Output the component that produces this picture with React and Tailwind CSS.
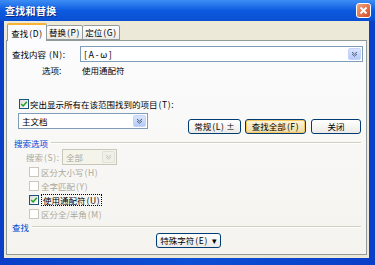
import React from "react";

const F = { fontFamily: '"Noto Sans CJK SC", "Noto Sans", sans-serif' };

function Check({ checked, disabled }) {
  return (
    <div
      className={`w-[10px] h-[10px] shrink-0 border flex items-center justify-center ${
        disabled ? "border-[#cac8bb] bg-white" : "border-[#1c5180] bg-gradient-to-br from-[#dcdcd7] to-white"
      }`}
    >
      {checked && (
        <svg width="8" height="8" viewBox="0 0 8 8">
          <path d="M1.2 4 L3.2 6 L6.8 1.8" stroke="#21a121" strokeWidth="1.5" fill="none" />
        </svg>
      )}
    </div>
  );
}

function Arrow({ disabled }) {
  return (
    <div
      className={`w-[13px] h-full rounded-[2px] flex items-center justify-center ${
        disabled ? "bg-[#f0efe8] border border-[#e0dfd8]" : "bg-gradient-to-b from-[#dbe5fd] to-[#b6cbf8] border border-[#c3d3fd]"
      }`}
    >
      <svg width="7" height="6" viewBox="0 0 7 6">
        <path d="M1 1 L3.5 3.2 L6 1 M1 3 L3.5 5.2 L6 3" stroke={disabled ? "#c9c7ba" : "#4d6185"} strokeWidth="1" fill="none" />
      </svg>
    </div>
  );
}

function K({ c }) {
  return <span className="tracking-[0.6px] ml-[1px]">({c})</span>;
}

function Btn({ children, className = "", def }) {
  return (
    <div
      className={`h-[15px] border border-[#003c74] rounded-[3px] flex items-center justify-center text-[8.5px] leading-none ${
        def ? "bg-gradient-to-b from-[#fff7dc] to-[#e9d9a5] shadow-[inset_0_0_0_1px_#f6c75d]" : "bg-gradient-to-b from-white to-[#ecebe6]"
      } ${className}`}
    >
      {children}
    </div>
  );
}

export default function App() {
  return (
    <div style={F} className="w-[375px] h-[265px] bg-gradient-to-r from-[#0a3fc8] via-[#0d4fd6] to-[#0a3fc8] flex flex-col overflow-hidden text-black">
      {/* title bar */}
      <div className="h-[21px] flex items-center justify-between pl-[5px] pr-[3px] bg-gradient-to-b from-[#3d8df4] via-[#0c5ae0] to-[#0a4fd2]">
        <span className="text-white text-[10px] font-bold tracking-[0.3px] [text-shadow:1px_1px_0_#0a2a8a]">查找和替换</span>
        <div className="w-[15px] h-[15px] rounded-[3px] border border-white bg-gradient-to-br from-[#f0a27f] to-[#d4481f] flex items-center justify-center mr-[1px]">
          <svg width="9" height="9" viewBox="0 0 9 9">
            <path d="M1.5 1.5 L7.5 7.5 M7.5 1.5 L1.5 7.5" stroke="white" strokeWidth="1.8" />
          </svg>
        </div>
      </div>
      {/* body */}
      <div className="flex-1 ml-[4px] mr-[6px] mb-[7px] bg-[#ece9d8] flex flex-col px-[2px] pt-[2px] pb-[3px]">
        {/* tabs */}
        <div className="flex items-end h-[17px] pl-[1px] text-[8.5px] leading-none">
          <div className="relative z-10 h-[18px] w-[40px] mb-[-1px] border border-[#919b9c] border-b-0 rounded-t-[2px] bg-[#fcfcfe] flex items-center justify-center border-t-[2px] border-t-[#f8b333]">
            查找<K c="D" />
          </div>
          <div className="h-[15px] w-[36px] border border-[#919b9c] border-l-0 rounded-t-[2px] bg-gradient-to-b from-white to-[#ecebe6] flex items-center justify-center">
            替换<K c="P" />
          </div>
          <div className="h-[15px] w-[37px] border border-[#919b9c] border-l-0 rounded-t-[2px] bg-gradient-to-b from-white to-[#ecebe6] flex items-center justify-center">
            定位<K c="G" />
          </div>
        </div>
        {/* panel */}
        <div className="flex-1 border border-[#919b9c] bg-gradient-to-b from-[#fcfcfe] to-[#f4f3ee] flex flex-col text-[8.5px] leading-none">
          <div className="flex items-center h-[16px] mt-[5px] pl-[5px] pr-[3px]">
            <span className="w-[68px]">查找内容 <K c="N" />:</span>
            <div className="flex-1 h-full border border-[#7f9db9] bg-white flex items-center justify-between pl-[3px] p-[1px]">
              <span className="tracking-[1.5px] text-[9px]">[A-ω]</span>
              <Arrow />
            </div>
          </div>
          <div className="flex items-center h-[12px] mt-[2px]">
            <span className="ml-[35px] w-[40px]">选项:</span>
            <span>使用通配符</span>
          </div>
          <div className="flex items-center h-[12px] mt-[22px] pl-[12px] gap-[1px]">
            <Check checked />
            <span>突出显示所有在该范围找到的项目<K c="T" />:</span>
          </div>
          <div className="flex items-start mt-[3px] pl-[11px]">
            <div className="w-[130px] h-[16px] border border-[#7f9db9] bg-white flex items-center justify-between pl-[3px] p-[1px]">
              <span>主文档</span>
              <Arrow />
            </div>
            <Btn className="ml-[40px] mt-[6px] w-[53px]">常规<K c="L" />&nbsp;±</Btn>
            <Btn def className="ml-[4px] mt-[6px] w-[61px]">查找全部<K c="F" /></Btn>
            <Btn className="ml-[5px] mt-[6px] w-[50px]">关闭</Btn>
          </div>
          {/* group: 搜索选项 */}
          <div className="flex items-center h-[12px] mt-[3px] pl-[7px] pr-[5px]">
            <span className="text-[#0046d5]">搜索选项</span>
            <div className="flex-1 ml-[3px] border-t border-[#d0d0bf] border-b border-b-white" />
          </div>
          <div className="flex items-center h-[16px] pl-[19px] text-[#aca899]">
            <span className="w-[36px]">搜索<K c="S" />:</span>
            <div className="w-[55px] h-full border border-[#c9c7ba] bg-[#f5f4ea] flex items-center justify-between pl-[3px] p-[1px]">
              <span>全部</span>
              <Arrow disabled />
            </div>
          </div>
          <div className="flex flex-col pl-[22px]">
            <div className="flex items-center h-[14px] gap-[2px] text-[#aca899]">
              <Check disabled />
              <span>区分大小写<K c="H" /></span>
            </div>
            <div className="flex items-center h-[14px] gap-[2px] text-[#aca899]">
              <Check disabled />
              <span>全字匹配<K c="Y" /></span>
            </div>
            <div className="flex items-center h-[14px] gap-[2px]">
              <Check checked />
              <span className="border border-dotted border-black px-[1px] py-[1px]">使用通配符<K c="U" /></span>
            </div>
            <div className="flex items-center h-[14px] gap-[2px] text-[#aca899]">
              <Check disabled />
              <span>区分全/半角<K c="M" /></span>
            </div>
          </div>
          <div className="flex items-center h-[12px] pl-[5px] pr-[5px]">
            <span className="text-[#0046d5]">查找</span>
            <div className="flex-1 ml-[3px] border-t border-[#d0d0bf] border-b border-b-white" />
          </div>
          <div className="flex pl-[149px]">
            <Btn className="w-[65px]">特殊字符<K c="E" />&nbsp;&nbsp;▾</Btn>
          </div>
        </div>
      </div>
    </div>
  );
}
